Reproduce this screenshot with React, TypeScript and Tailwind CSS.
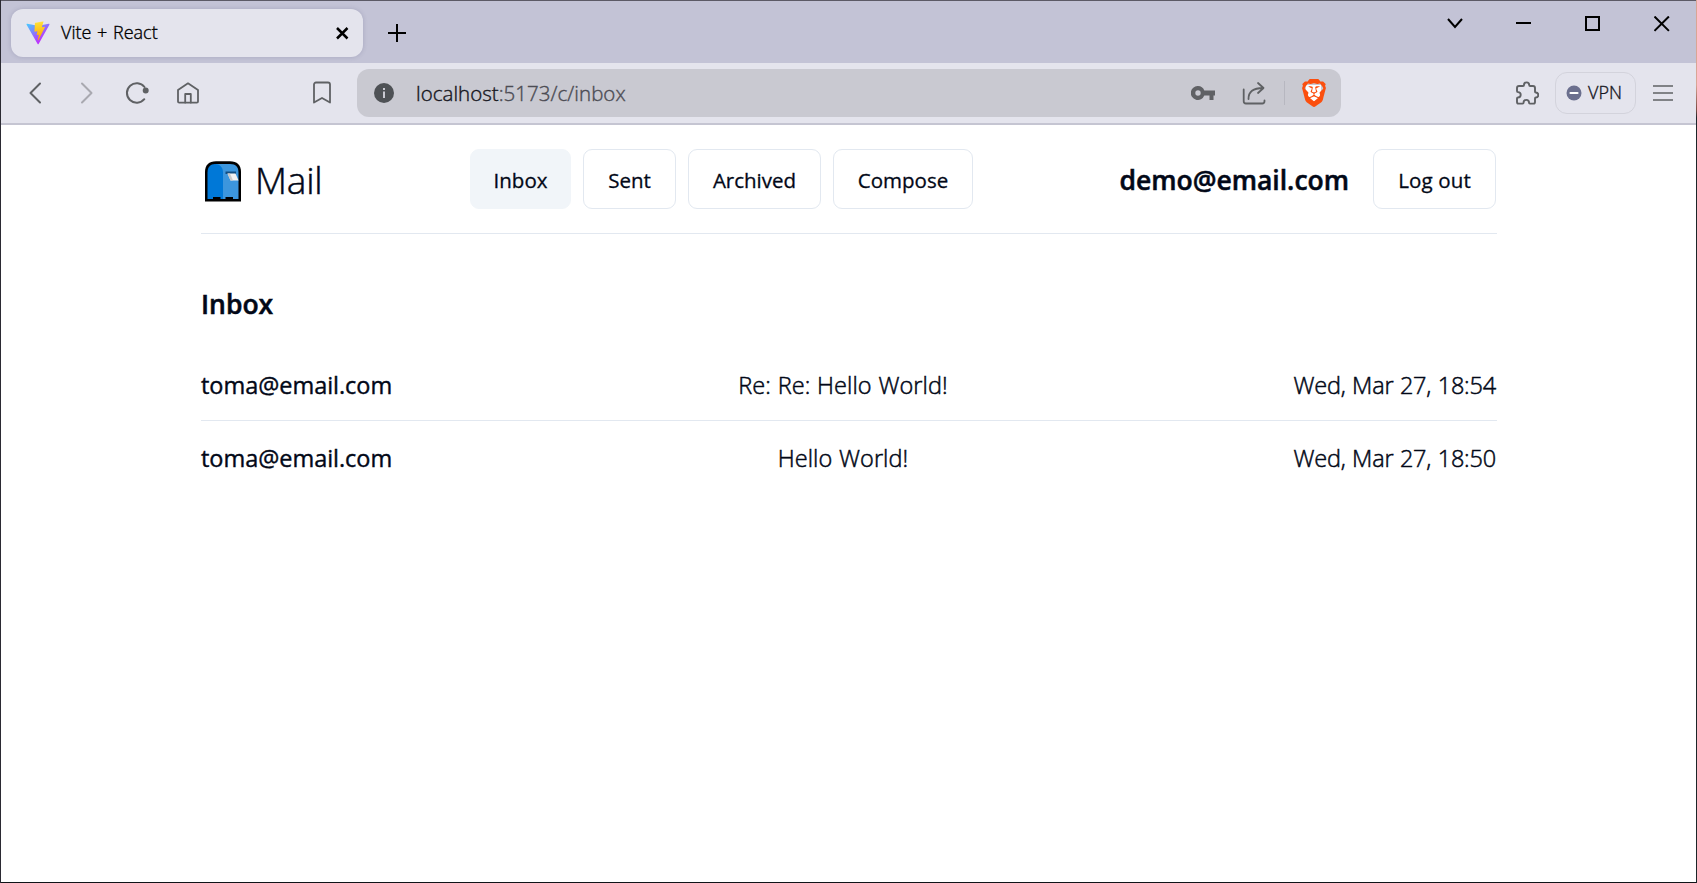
import type { ReactNode } from "react";
import { SiBrave } from "react-icons/si";

function ViteLogo() {
  return (
    <svg viewBox="0 0 410 404" className="h-6 w-6 shrink-0">
      <defs>
        <linearGradient id="shield" x1="6" y1="33" x2="235" y2="344" gradientUnits="userSpaceOnUse">
          <stop stopColor="#41D1FF" />
          <stop offset="1" stopColor="#BD34FE" />
        </linearGradient>
        <linearGradient id="bolt" x1="194.651" y1="8.818" x2="236.076" y2="292.989" gradientUnits="userSpaceOnUse">
          <stop stopColor="#FFEA83" />
          <stop offset="0.083" stopColor="#FFDD35" />
          <stop offset="1" stopColor="#FFA800" />
        </linearGradient>
      </defs>
      <path
        fill="url(#shield)"
        d="M399.641 59.5246L215.643 388.545C211.844 395.338 202.084 395.378 198.228 388.618L10.5817 59.5563C6.38087 52.1896 12.6802 43.2665 21.0281 44.7586L205.223 77.6824C206.398 77.8924 207.601 77.8904 208.776 77.6763L389.119 44.8058C397.439 43.2894 403.768 52.1434 399.641 59.5246Z"
      />
      <path
        fill="url(#bolt)"
        d="M292.965 1.5744L156.801 28.2552C154.563 28.6937 152.906 30.5903 152.771 32.8664L144.395 174.33C144.198 177.662 147.258 180.248 150.51 179.498L188.42 170.749C191.967 169.931 195.172 173.055 194.443 176.622L183.18 231.775C182.422 235.487 185.907 238.661 189.532 237.56L212.947 230.446C216.577 229.344 220.065 232.527 219.297 236.242L201.398 322.875C200.278 328.294 207.486 331.249 210.492 326.603L212.5 323.5L323.454 102.072C325.312 98.3645 322.108 94.137 318.036 94.9228L279.014 102.454C275.347 103.161 272.227 99.746 273.262 96.1583L298.731 7.86689C299.767 4.27314 296.636 0.855181 292.965 1.5744Z"
      />
    </svg>
  );
}

function Icon({ className, children, width = 1.8 }: { className: string; children: ReactNode; width?: number }) {
  return (
    <svg
      viewBox="0 0 24 24"
      fill="none"
      stroke="currentColor"
      strokeWidth={width}
      strokeLinecap="round"
      strokeLinejoin="round"
      className={`h-6 w-6 shrink-0 ${className}`}
    >
      {children}
    </svg>
  );
}

function WindowIcon({ className, children }: { className: string; children: ReactNode }) {
  return (
    <svg viewBox="0 0 16 16" fill="none" stroke="#000" strokeWidth={2} className={`h-4 w-4 shrink-0 ${className}`}>
      {children}
    </svg>
  );
}

function Postbox() {
  return (
    <svg viewBox="0 0 36 41" className="mt-[5px] ml-1 h-[41px] w-9 shrink-0">
      <path d="M0 40.500V11C0 4 4 .3 11 .3H25C32 .3 36 4 36 11V40.500Z" fill="#000" />
      <path d="M10 3H25C31 3 33.500 6 33.500 11.500V38H18V12Z" fill="#3c96dd" />
      <path d="M2.500 38V11.500C2.500 6 5.500 3 10 3S18 6 18 11.500V38Z" fill="#0078d7" />
      <path d="M8 38.500V36H15.500V38.500ZM20.500 38.500V36H28V38.500Z" fill="#000" />
      <path d="M20.500 10.500H31V13H20.500Z" fill="#124f83" />
      <path d="M22.500 12.500H30.500L33.500 19.500H25.500Z" fill="#f2f2f2" />
      <path d="M22.500 12.500H25L28 19.500H25.500Z" fill="#c9c9c9" />
    </svg>
  );
}

function TabStrip() {
  return (
    <div className="flex h-[62px] bg-[#c3c3d6]">
      <div className="mt-2 ml-2.5 flex h-12 w-[352px] items-center rounded-xl bg-[#e4e4ed] pr-[13px] pl-[15px] shadow-[0_0_4px_rgba(80,80,120,0.25)]">
        <ViteLogo />
        <span className="ml-[11px] flex-1 pb-0.5 text-[18px] leading-6 font-light text-black [word-spacing:1px] [-webkit-text-stroke:0.35px_#000]">
          Vite + React
        </span>
        <WindowIcon className="">
          <path d="M3 3L13.500 13.500M13.500 3L3 13.500" strokeWidth="2.500" />
        </WindowIcon>
      </div>
      <svg viewBox="0 0 18 18" className="mt-[23px] ml-[25px] h-[18px] w-[18px]" stroke="#000" strokeWidth="2">
        <path d="M9 0V18M0 9H18" />
      </svg>
      <div className="mt-[15px] mr-[26px] ml-auto flex">
        <WindowIcon className="mr-[53px]">
          <path d="M1 3L8 11L15 3" />
        </WindowIcon>
        <WindowIcon className="mr-[53px]">
          <path d="M0 7H15" />
        </WindowIcon>
        <WindowIcon className="mr-[53px]">
          <path d="M1 1H14V14H1Z" />
        </WindowIcon>
        <WindowIcon className="">
          <path d="M.5 .5L14.900 14.900M14.900 .5L.5 14.900" />
        </WindowIcon>
      </div>
    </div>
  );
}

function Toolbar() {
  return (
    <div className="flex h-[62px] items-center border-b-2 border-[#c5c5d2] bg-[#e4e4ed] text-[#5f6164]">
      <Icon className="ml-[22px]" width={2}>
        <path d="M17 2.500L7.500 12L17 21.500" />
      </Icon>
      <Icon className="ml-[28px] text-[#a9a9b0]" width={2}>
        <path d="M7 2.500L16.500 12L7 21.500" />
      </Icon>
      <Icon className="ml-[26px]" width={2}>
        <path d="M19.500 6A9.800 9.800 0 1 0 19.300 18.200" />
        <circle cx="20.700" cy="9.500" r="2" fill="currentColor" />
      </Icon>
      <Icon className="ml-[27px]">
        <path d="M2 9L12 2.300L22 9V20.500A1.200 1.200 0 0 1 20.800 21.700H3.200A1.200 1.200 0 0 1 2 20.500Z" />
        <path d="M9.200 21.500V13H14.800V21.500" />
      </Icon>
      <Icon className="ml-[110px]">
        <path d="M4 21.500V3.500A2 2 0 0 1 6 1.500H18A2 2 0 0 1 20 3.500V21.500L12 17Z" />
      </Icon>

      <div className="ml-[23px] flex h-12 w-[984px] items-center rounded-xl bg-[#c9c9d1] pr-[14px] pl-[17px]">
        <svg viewBox="0 0 20 20" className="h-5 w-5 shrink-0">
          <circle cx="10" cy="10" r="10" fill="#4e5155" />
          <path d="M9 8.500H11V15H9ZM9 5H11V7H9Z" fill="#c9c9d1" />
        </svg>
        <span className="ml-[22px] flex-1 text-[20.5px] font-light tracking-[0.03px] text-[#4c4c54] [-webkit-text-stroke:0.4px]">
          <span className="text-[#16161e]">localhost</span>:5173/c/inbox
        </span>
        <svg viewBox="0 0 24 14" className="h-[14px] w-6 shrink-0" fill="#606165">
          <path
            fillRule="evenodd"
            d="M7 0A7 7 0 1 0 13.300 9.500H18.500V14H22.500V9.500H24V4.500H13.300A7 7 0 0 0 7 0ZM7 4.300A2.700 2.700 0 1 1 7 9.700A2.700 2.700 0 0 1 7 4.300Z"
          />
        </svg>
        <Icon className="ml-[27px]">
          <path d="M1.700 8.500V20.300A2.200 2.200 0 0 0 3.900 22.500H20.300A2.200 2.200 0 0 0 22.500 20.300V19.500" />
          <path d="M6.500 18C6.500 11 11 7 21 7M16 2L21.500 7L16 12" />
        </Icon>
        <span className="ml-[18px] h-6 w-px bg-[#b7b7c0]" />
        <span className="ml-[15px] flex h-7 w-[27px] items-center justify-center bg-[linear-gradient(#fff,#fff)] bg-[length:15px_17px] bg-center bg-no-repeat">
          <SiBrave className="h-7 w-7 shrink-0 text-[#fb4f0e]" />
        </span>
      </div>

      <Icon className="mr-[16px] ml-auto" width={1.9}>
        <path d="M4 5H8C8.800 5 9 4.600 9 4A2.600 2.600 0 0 1 14.200 4C14.200 4.600 14.500 5 15.200 5H18A2 2 0 0 1 20 7V10.500C20 11.100 20.300 11.500 20.800 11.500A2.500 2.500 0 0 1 20.800 16.500C20.300 16.500 20 16.900 20 17.500V21A1.600 1.600 0 0 1 18.400 22.600H15C14.300 22.600 14 22.300 14 21.600A2.700 2.700 0 0 0 8.600 21.600C8.600 22.300 8.300 22.600 7.600 22.600H3.600A1.600 1.600 0 0 1 2 21V17.500C2 16.800 2.300 16.500 3 16.500A2.700 2.700 0 0 0 3 11.100C2.300 11.100 2 10.800 2 10.100V7A2 2 0 0 1 4 5Z" />
      </Icon>
      <div className="flex h-[42px] w-[81px] items-center rounded-xl border border-[#d3d3dc] pl-[10px]">
        <svg viewBox="0 0 16 16" className="h-4 w-4 shrink-0">
          <circle cx="8" cy="8" r="7.500" fill="#6b6f8e" />
          <path d="M4.500 8H11.500" stroke="#fff" strokeWidth="2.200" strokeLinecap="round" />
        </svg>
        <span className="ml-[6px] pb-0.5 text-[18px] leading-6 font-light text-[#16161e] [-webkit-text-stroke:0.35px_#16161e]">
          VPN
        </span>
      </div>
      <svg viewBox="0 0 20 16" className="mr-[23px] ml-[17px] h-4 w-5" stroke="#5f6164" strokeWidth="1.700">
        <path d="M0 1H20M0 8H20M0 15H20" />
      </svg>
    </div>
  );
}

function NavButton({ label, className }: { label: string; className: string }) {
  return (
    <button
      className={`flex h-[60px] items-center justify-center rounded-[9px] border pt-0.5 text-[20.5px] [-webkit-text-stroke:0.3px_#020817] ${className}`}
    >
      {label}
    </button>
  );
}

const mails = [
  { from: "toma@email.com", subject: "Re: Re: Hello World!", date: "Wed, Mar 27, 18:54" },
  { from: "toma@email.com", subject: "Hello World!", date: "Wed, Mar 27, 18:50" },
];

function MailPage() {
  return (
    <main className="mr-[199px] ml-[200px] flex-1 text-[#020817]">
      <header className="flex h-[109px] items-start justify-between border-b border-[#e2e8f0] pt-6">
        <div className="flex h-[60px] w-[269px] items-center">
          <Postbox />
          <span className="mt-0.5 ml-[14px] text-[37px] font-light tracking-[-0.2px] [-webkit-text-stroke:0.5px_#020817]">
            Mail
          </span>
        </div>
        <nav className="flex gap-3">
          <NavButton label="Inbox" className="w-[101px] border-[#f1f5f9] bg-[#f1f5f9]" />
          <NavButton label="Sent" className="w-[93px] border-[#e2e8f0]" />
          <NavButton label="Archived" className="w-[133px] border-[#e2e8f0]" />
          <NavButton label="Compose" className="w-[140px] border-[#e2e8f0]" />
        </nav>
        <div className="mr-px ml-auto flex h-[60px] items-center gap-6">
          <span className="pt-[3px] text-[26.5px] font-semibold [-webkit-text-stroke:0.5px_#020817]">demo@email.com</span>
          <NavButton label="Log out" className="w-[123px] border-[#e2e8f0] tracking-[0.15px]" />
        </div>
      </header>
      <h2 className="mt-[50px] h-10 text-[26.5px] leading-10 font-semibold [-webkit-text-stroke:0.5px_#020817]">Inbox</h2>
      <ul className="mt-6 divide-y divide-[#e2e8f0]">
        {mails.map((mail) => (
          <li
            key={mail.date}
            className="grid h-[73px] grid-cols-[1fr_auto_1fr] items-center pt-px text-[23.5px] leading-9 font-light [-webkit-text-stroke:0.5px_#020817]"
          >
            <span className="font-normal tracking-[-0.03px] [-webkit-text-stroke:0.4px_#020817]">{mail.from}</span>
            <span className="mr-[12px] tracking-[0.08px] [word-spacing:0.5px]">{mail.subject}</span>
            <span className="mr-px text-right tracking-[-0.18px] [word-spacing:0.5px]">{mail.date}</span>
          </li>
        ))}
      </ul>
    </main>
  );
}

export default function App() {
  return (
    <div className="flex h-[883px] w-[1697px] bg-white font-['Open_Sans','Noto_Sans',sans-serif] antialiased">
      <div className="w-px bg-[#2b2a33]" />
      <div className="flex flex-1 flex-col border-t border-b border-t-[#5c5a66] border-b-[#101418]">
        <TabStrip />
        <Toolbar />
        <MailPage />
      </div>
      <div className="w-px bg-[linear-gradient(#d9a595_0,#d9a595_85px,#7a4a42_110px,#1b2528_118px)]" />
    </div>
  );
}
